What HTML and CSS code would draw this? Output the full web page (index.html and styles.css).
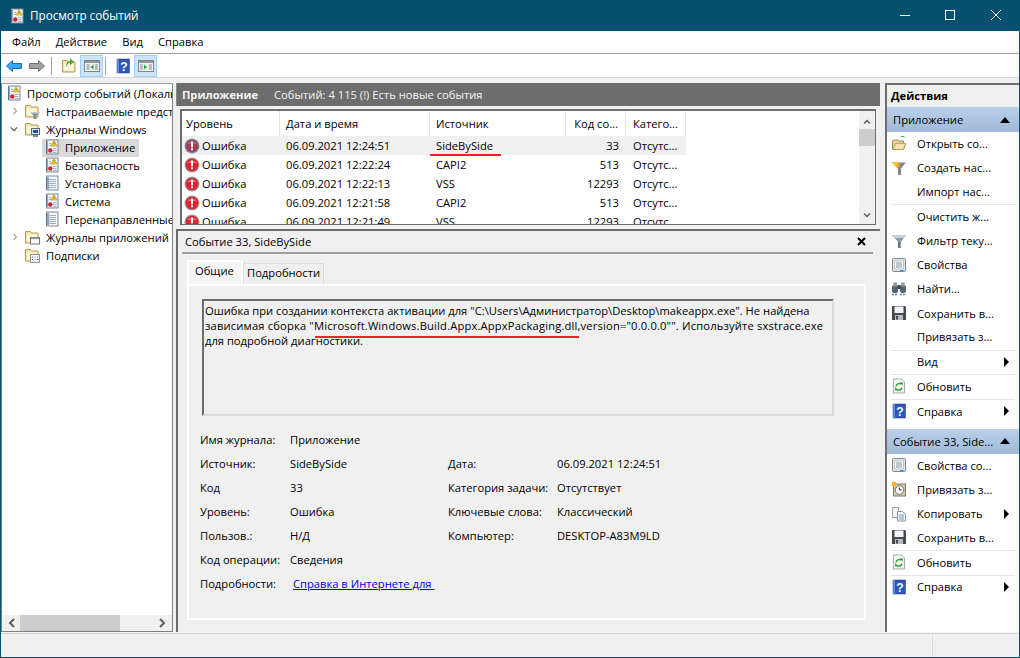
FILE: index.html
```html
<!DOCTYPE html>
<html lang="ru">

<head>
	<meta charset="utf-8" />
	<title>Просмотр событий</title>
	<link rel="stylesheet" href="styles.css">
</head>

<body>
	<svg class="defs" width="0" height="0">
		<symbol id="log" viewBox="0 0 16 16">
			<rect x="2.500" y="1" width="11.500" height="14" fill="#f2f5fa" stroke="#7a879a" />
			<path d="M2 3h3M2 5h3M2 7h3M2 9h3M2 11h3M2 13h3" stroke="#3f5a86" />
			<path d="M5 4.500h7M5 6.500h7M5 8.500h7M5 10.500h7M5 12.500h7" stroke="#9db0c8" />
		</symbol>
		<symbol id="logwarn" viewBox="0 0 16 16">
			<rect x="2.500" y="1" width="11.500" height="14" fill="#f2f5fa" stroke="#7a879a" />
			<path d="M2 3h2M2 5h2M2 7h2M2 9h2M2 11h2M2 13h2" stroke="#3f5a86" />
			<path d="M5 4.500h2M5 6.500h2M9 9.500h3.500M9 11.500h3.500M9 13.500h3.500" stroke="#9db0c8" />
			<path d="M10 1.500l3 5.500h-6z" fill="#f7d12e" stroke="#b58a10" stroke-width=".6" />
			<path d="M9.700 3.500h.7v2h-.7z" fill="#5a4a00" />
			<circle cx="6.300" cy="11.500" r="2.200" fill="#d5222c" />
		</symbol>
		<symbol id="folder" viewBox="0 0 16 16">
			<path d="M1.500 2.500h5l1 1.500h6.500v10h-12.500z" fill="#f8e6a8" stroke="#b59c5c" />
			<rect x="3" y="5.500" width="9.500" height="7" fill="#fdf7de" />
		</symbol>
		<symbol id="folderfilter" viewBox="0 0 16 16">
			<use href="#folder" width="16" height="16" />
			<path d="M6 9h10l-3.500 3.500v3.500h-3v-3.500z" fill="#7f8f9c" />
			<path d="M6 9h10l-1.500 1.500h-7z" fill="#c6d0d8" />
		</symbol>
		<symbol id="foldermon" viewBox="0 0 16 16">
			<use href="#folder" width="16" height="16" />
			<rect x="7.500" y="7.500" width="8" height="6" fill="#dfe6f0" stroke="#5a6878" />
			<rect x="9" y="9" width="5" height="3" fill="#1c4fae" />
			<path d="M9 15h5" stroke="#5a6878" stroke-width="1.500" />
		</symbol>
		<symbol id="folderwin" viewBox="0 0 16 16">
			<use href="#folder" width="16" height="16" />
			<rect x="6.500" y="8.500" width="9" height="6.500" fill="#fff" stroke="#6d7682" />
			<path d="M7 9.500h8" stroke="#9aa4b0" stroke-width="1.500" />
		</symbol>
		<symbol id="foldersub" viewBox="0 0 16 16">
			<use href="#folder" width="16" height="16" />
			<rect x="6.500" y="7.500" width="9" height="8" fill="#fff" stroke="#8a94a0" />
			<path d="M8 10h1M10.500 10h1M13 10h1M8 12.500h1M10.500 12.500h1" stroke="#3f6fb8" />
			<path d="M13 12.500h1.500" stroke="#d5222c" />
		</symbol>
		<symbol id="openfolder" viewBox="0 0 16 16">
			<path d="M1.500 6v8.500h11l2-6h-2v-2.500h-5l-1-1h-4z" fill="#e8d290" stroke="#a38c50" />
			<path d="M2 14.500l2.500-6h10l-2 6z" fill="#f5e3ad" stroke="#a38c50" stroke-width=".6" />
			<path d="M10 1.500h3.500" stroke="#3fc04a" />
		</symbol>
		<symbol id="filter" viewBox="0 0 16 16">
			<path d="M1 2.500h14l-5 6v6.500h-3v-6.500z" fill="#8a9aa8" />
			<path d="M1 2.500h14l-2 2.500h-10z" fill="#c8d2da" />
			<path d="M7 9h1.500v6h-1.500z" fill="#5f6d78" />
		</symbol>
		<symbol id="filteryellow" viewBox="0 0 16 16">
			<path d="M1 2.500h14l-5 6v6.500h-3v-6.500z" fill="#7f8a93" />
			<path d="M1 2.500h8l-1 5h-2.500z" fill="#f4a81c" />
			<circle cx="4.500" cy="3.500" r="2" fill="#ffc93a" />
		</symbol>
		<symbol id="props" viewBox="0 0 16 16">
			<rect x="1.500" y="1.500" width="13" height="13" rx="1" fill="#dfe4ea" stroke="#7c8794" />
			<rect x="3.500" y="4" width="9" height="8" fill="#fff" stroke="#9aa6b4" stroke-width=".6" />
			<path d="M5 6h6M5 8h6M5 10h6" stroke="#7d8fa6" />
			<rect x="9" y="13" width="3.500" height="1.200" fill="#3e9bd8" />
		</symbol>
		<symbol id="binoculars" viewBox="0 0 16 16">
			<rect x="1" y="4" width="6" height="8" rx="2" fill="#59636e" />
			<rect x="9" y="4" width="6" height="8" rx="2" fill="#59636e" />
			<rect x="2.500" y="1.500" width="3.500" height="4" fill="#8e98a3" />
			<rect x="10" y="1.500" width="3.500" height="4" fill="#8e98a3" />
			<rect x="6.500" y="4" width="3" height="4" fill="#3b434c" />
			<path d="M1 13.500h6M9 13.500h6" stroke="#3c86d6" stroke-width="1.500" stroke-dasharray="2 1" />
		</symbol>
		<symbol id="floppy" viewBox="0 0 16 16">
			<path d="M1 1h13l1 1v13h-14z" fill="#454b52" />
			<rect x="3.500" y="1.500" width="9" height="6.500" fill="#f4f5f6" />
			<rect x="4" y="10" width="8" height="5" fill="#b5bbc2" />
			<rect x="5" y="11" width="2" height="3.500" fill="#454b52" />
		</symbol>
		<symbol id="refresh" viewBox="0 0 16 16">
			<path d="M2.500 1h8l3 3v11h-11z" fill="#f4f6f4" stroke="#a4aeb0" />
			<path d="M11 9.500a3.200 3.200 0 0 1-5.600 1.500M5 8.500a3.200 3.200 0 0 1 5-2.300" fill="none" stroke="#34a63c" stroke-width="1.500" />
			<path d="M8.800 4.200l3.200.3-.4 3.200z" fill="#34a63c" />
			<path d="M4 9l3.200 3-3.200.5z" fill="#34a63c" />
		</symbol>
		<symbol id="help" viewBox="0 0 16 16">
			<rect x="2" y="1" width="12.500" height="14" fill="#2d58b8" stroke="#1d3a80" stroke-width=".5" />
			<rect x="2" y="1" width="2" height="14" fill="#5e86d8" />
			<text x="9" y="12.500" class="helpmark">?</text>
		</symbol>
		<symbol id="clock" viewBox="0 0 16 16">
			<rect x="2.500" y="3" width="12" height="12" fill="#d9cdb9" stroke="#7f7564" />
			<circle cx="8.500" cy="9" r="4.300" fill="#fff" stroke="#6e6e6e" />
			<path d="M8.500 6.500v2.500h2.200" fill="none" stroke="#333" />
			<circle cx="3" cy="3" r="2.500" fill="#f7b52a" />
		</symbol>
		<symbol id="copy" viewBox="0 0 16 16">
			<path d="M1.500 1.500h6v10h-6z" fill="#f5f7fa" stroke="#9aa6b4" />
			<path d="M6.500 5.500h5l3 3v6.500h-8z" fill="#fff" stroke="#7d8fa6" />
			<path d="M8 9h5M8 11h5M8 13h5" stroke="#5d93c8" />
		</symbol>
		<symbol id="error" viewBox="0 0 16 16">
			<circle cx="8" cy="8" r="7.500" fill="#9a9a9a" />
			<circle cx="8" cy="8" r="6.300" fill="#dd2230" />
			<path d="M3 6a5.500 4 0 0 1 10 0z" fill="#ef7078" />
			<rect x="7" y="3.500" width="2" height="5.800" fill="#fff" />
			<rect x="7" y="10.300" width="2" height="2" fill="#fff" />
		</symbol>
		<symbol id="errorsel" viewBox="0 0 16 16">
			<circle cx="8" cy="8" r="7.500" fill="#7d93b4" />
			<circle cx="8" cy="8" r="6.300" fill="#a33d54" />
			<path d="M3 6a5.500 4 0 0 1 10 0z" fill="#b86c7e" />
			<rect x="7" y="3.500" width="2" height="5.800" fill="#fff" />
			<rect x="7" y="10.300" width="2" height="2" fill="#fff" />
		</symbol>
		<symbol id="hidetree" viewBox="0 0 16 12">
			<rect x=".5" y=".5" width="15" height="11" fill="#eef0f2" stroke="#7f868e" />
			<rect x="1" y="1" width="14" height="2" fill="#8f979f" />
			<path d="M2.500 5h3M2.500 7h3M2.500 9h3M11 5h3M11 7h3M11 9h3" stroke="#7f868e" />
			<path d="M9.500 4.500v5l-3-2.500z" fill="#2fa83a" />
		</symbol>
		<symbol id="showtree" viewBox="0 0 16 12">
			<rect x=".5" y=".5" width="15" height="11" fill="#eef0f2" stroke="#7f868e" />
			<rect x="1" y="1" width="14" height="2" fill="#8f979f" />
			<path d="M2 5h2.500M2 7h2.500M2 9h2.500M11 5h3M11 7h3M11 9h3" stroke="#7f868e" />
			<path d="M6 4.500v5l3-2.500z" fill="#2fa83a" />
		</symbol>
	</svg>

	<div class="window">
		<div class="titlebar">
			<svg class="icon"><use href="#logwarn" /></svg>
			<span class="title">Просмотр событий</span>
			<div class="wincontrols">
				<svg width="46" height="31" class="winbtn"><path d="M19 15.500h10" stroke="#fff" /></svg>
				<svg width="46" height="31" class="winbtn"><rect x="18.500" y="10.500" width="9" height="9" fill="none" stroke="#fff" /></svg>
				<svg width="46" height="31" class="winbtn"><path d="M18 10l10 10M28 10l-10 10" stroke="#fff" /></svg>
			</div>
		</div>

		<div class="menubar">
			<span>Файл</span><span>Действие</span><span>Вид</span><span>Справка</span>
		</div>

		<div class="toolbar">
			<svg class="arrow" viewBox="0 0 16 12"><path d="M.500 6l6-5.500v3h9v5h-9v3z" fill="#3ba6f2" stroke="#1d6eb8" /></svg>
			<svg class="arrow" viewBox="0 0 16 12"><path d="M15.500 6l-6-5.500v3h-9v5h9v3z" fill="#a2a2a2" stroke="#707070" /></svg>
			<i class="toolsep"></i>
			<span class="toolbtn"><svg class="icon"><use href="#folder" /></svg><svg class="uparrow" width="10" height="11"><path d="M1 10q0-6 4-6v-3l4 4-4 3v-3q-2 1-4 5z" fill="#4aa83a" /></svg></span>
			<span class="toolbtn on"><svg class="paneicon"><use href="#hidetree" /></svg></span>
			<i class="toolsep second"></i>
			<span class="toolbtn"><svg class="icon"><use href="#help" /></svg></span>
			<span class="toolbtn on"><svg class="paneicon"><use href="#showtree" /></svg></span>
		</div>

		<div class="main">
			<div class="tree">
				<div class="treerows">
					<div class="node"><svg class="icon"><use href="#logwarn" /></svg><span>Просмотр событий (Локальный)</span></div>
					<div class="node lvl1"><svg class="chev" viewBox="0 0 8 10"><path d="M2 1l4 4-4 4" /></svg><svg class="icon"><use href="#folderfilter" /></svg><span>Настраиваемые представления</span></div>
					<div class="node lvl1"><svg class="chev open" viewBox="0 0 10 8"><path d="M1 2l4 4 4-4" /></svg><svg class="icon"><use href="#foldermon" /></svg><span>Журналы Windows</span></div>
					<div class="node lvl2 current"><svg class="icon"><use href="#logwarn" /></svg><span>Приложение</span></div>
					<div class="node lvl2"><svg class="icon"><use href="#logwarn" /></svg><span>Безопасность</span></div>
					<div class="node lvl2"><svg class="icon"><use href="#log" /></svg><span>Установка</span></div>
					<div class="node lvl2"><svg class="icon"><use href="#logwarn" /></svg><span>Система</span></div>
					<div class="node lvl2"><svg class="icon"><use href="#log" /></svg><span>Перенаправленные события</span></div>
					<div class="node lvl1"><svg class="chev" viewBox="0 0 8 10"><path d="M2 1l4 4-4 4" /></svg><svg class="icon"><use href="#folderwin" /></svg><span>Журналы приложений и служб</span></div>
					<div class="node lvl1 nochev"><svg class="icon"><use href="#foldersub" /></svg><span>Подписки</span></div>
				</div>
				<div class="hscroll">
					<svg class="hchev" viewBox="0 0 8 10"><path d="M6 1l-4 4 4 4" /></svg>
					<div class="hthumb"></div>
					<svg class="hchev" viewBox="0 0 8 10"><path d="M2 1l4 4-4 4" /></svg>
				</div>
			</div>

			<div class="center">
				<div class="banner"><b>Приложение</b><span>Событий: 4 115 (!) Есть новые события</span></div>

				<div class="events">
					<div class="grid">
						<div class="row head">
							<span>Уровень</span><span>Дата и время</span><span>Источник</span><span class="num">Код со...</span><span>Катего...</span>
						</div>
						<div class="row sel">
							<span><svg class="icon"><use href="#errorsel" /></svg>Ошибка</span><span>06.09.2021 12:24:51</span><span>SideBySide</span><span class="num">33</span><span>Отсутс...</span>
						</div>
						<div class="row">
							<span><svg class="icon"><use href="#error" /></svg>Ошибка</span><span>06.09.2021 12:22:24</span><span>CAPI2</span><span class="num">513</span><span>Отсутс...</span>
						</div>
						<div class="row">
							<span><svg class="icon"><use href="#error" /></svg>Ошибка</span><span>06.09.2021 12:22:13</span><span>VSS</span><span class="num">12293</span><span>Отсутс...</span>
						</div>
						<div class="row">
							<span><svg class="icon"><use href="#error" /></svg>Ошибка</span><span>06.09.2021 12:21:58</span><span>CAPI2</span><span class="num">513</span><span>Отсутс...</span>
						</div>
						<div class="row">
							<span><svg class="icon"><use href="#error" /></svg>Ошибка</span><span>06.09.2021 12:21:49</span><span>VSS</span><span class="num">12293</span><span>Отсутс...</span>
						</div>
						<i class="redline srcline"></i>
					</div>
					<div class="vscroll">
						<svg class="vchev" viewBox="0 0 10 8"><path d="M1 6l4-4 4 4" /></svg>
						<div class="vthumb"></div>
						<svg class="vchev" viewBox="0 0 10 8"><path d="M1 2l4 4 4-4" /></svg>
					</div>
				</div>

				<div class="detail">
					<div class="detailhead">
						<span>Событие 33, SideBySide</span>
						<svg width="9" height="9"><path d="M1 1l7 7M8 1l-7 7" stroke="#000" stroke-width="2" /></svg>
					</div>
					<div class="tabs">
						<span class="tab active">Общие</span><span class="tab">Подробности</span>
					</div>
					<div class="tabpanel">
						<div class="message">
							Ошибка при создании контекста активации для "C:\Users\Администратор\Desktop\makeappx.exe". Не найдена <span class="wideline">зависимая сборка "Microsoft.Windows.Build.Appx.AppxPackaging.dll,version="0.0.0.0"". Используйте sxstrace.exe</span><br>для подробной диагностики.
							<i class="redline msgline"></i>
						</div>
						<div class="fields">
							<span>Имя журнала:</span><span>Приложение</span><span></span><span></span>
							<span>Источник:</span><span>SideBySide</span><span>Дата:</span><span>06.09.2021 12:24:51</span>
							<span>Код</span><span>33</span><span>Категория задачи:</span><span>Отсутствует</span>
							<span>Уровень:</span><span>Ошибка</span><span>Ключевые слова:</span><span>Классический</span>
							<span>Пользов.:</span><span>Н/Д</span><span>Компьютер:</span><span>DESKTOP-A83M9LD</span>
							<span>Код операции:</span><span>Сведения</span><span></span><span></span>
							<span>Подробности:</span><a class="link" href="#">Справка в Интернете для&nbsp;</a>
						</div>
					</div>
				</div>
			</div>

			<div class="actions">
				<div class="actionstitle">Действия</div>
				<div class="section"><span>Приложение</span><i class="caret"></i></div>
				<div class="action"><svg class="icon"><use href="#openfolder" /></svg><span>Открыть со...</span></div>
				<div class="action"><svg class="icon"><use href="#filteryellow" /></svg><span>Создать нас...</span></div>
				<div class="action sep"><i class="noicon"></i><span>Импорт нас...</span></div>
				<div class="action"><i class="noicon"></i><span>Очистить ж...</span></div>
				<div class="action"><svg class="icon"><use href="#filter" /></svg><span>Фильтр теку...</span></div>
				<div class="action"><svg class="icon"><use href="#props" /></svg><span>Свойства</span></div>
				<div class="action"><svg class="icon"><use href="#binoculars" /></svg><span>Найти...</span></div>
				<div class="action"><svg class="icon"><use href="#floppy" /></svg><span>Сохранить в...</span></div>
				<div class="action sep"><i class="noicon"></i><span>Привязать з...</span></div>
				<div class="action sep"><i class="noicon"></i><span>Вид</span><i class="more"></i></div>
				<div class="action sep"><svg class="icon"><use href="#refresh" /></svg><span>Обновить</span></div>
				<div class="action"><svg class="icon"><use href="#help" /></svg><span>Справка</span><i class="more"></i></div>
				<div class="section second"><span>Событие 33, Side...</span><i class="caret"></i></div>
				<div class="action"><svg class="icon"><use href="#props" /></svg><span>Свойства со...</span></div>
				<div class="action"><svg class="icon"><use href="#clock" /></svg><span>Привязать з...</span></div>
				<div class="action"><svg class="icon"><use href="#copy" /></svg><span>Копировать</span><i class="more"></i></div>
				<div class="action sep"><svg class="icon"><use href="#floppy" /></svg><span>Сохранить в...</span></div>
				<div class="action sep"><svg class="icon"><use href="#refresh" /></svg><span>Обновить</span></div>
				<div class="action"><svg class="icon"><use href="#help" /></svg><span>Справка</span><i class="more"></i></div>
			</div>
		</div>

		<div class="statusbar"><i></i></div>
	</div>
</body>

</html>
```

FILE: styles.css
```css
* {
	box-sizing: border-box;
}

body {
	margin: 0;
	font-family: "Open Sans", "Noto Sans", sans-serif;
	font-size: 11.2px;
	color: #000;
	overflow: hidden;
}

.defs {
	position: absolute;
}

.helpmark {
	font: bold 12px "Liberation Sans", sans-serif;
	fill: #fff;
	text-anchor: middle;
}

.icon {
	width: 16px;
	height: 16px;
	flex: none;
}

.window {
	width: 1020px;
	height: 658px;
	display: flex;
	flex-direction: column;
	background: #f0f0f0;
	border: 1px solid #05506f;
	border-top: 0;
}

.titlebar {
	height: 31px;
	flex: none;
	margin: 0 -1px;
	padding-left: 9px;
	display: flex;
	align-items: center;
	background: #05506f;
	color: #fff;
}

.title {
	margin: 0 0 2px 5px;
	font-size: 11.7px;
}

.wincontrols {
	margin-left: auto;
	margin-right: 1px;
	display: flex;
}

.winbtn {
	display: block;
}

.menubar {
	height: 23px;
	flex: none;
	padding: 0 0 2px 3.5px;
	display: flex;
	align-items: center;
	background: #fff;
	border-bottom: 1px solid #a0a0a0;
}

.menubar span {
	padding: 0 7.5px;
}

.toolbar {
	height: 24px;
	flex: none;
	padding-left: 5px;
	display: flex;
	align-items: center;
	background: #fff;
	border-bottom: 1px solid #d8d8d8;
}

.arrow {
	width: 16px;
	height: 12px;
	margin-right: 7px;
}

.toolsep {
	width: 1px;
	height: 18px;
	margin: 0 5px 0 -1px;
	background: #a0a0a0;
}

.toolsep.second {
	margin: 0 5px 0 2px;
}

.toolbtn {
	width: 23px;
	height: 22px;
	display: flex;
	align-items: center;
	justify-content: center;
	position: relative;
}

.toolbtn.on {
	background: #cce4f7;
	border: 1px solid #99d1ff;
}

.paneicon {
	width: 16px;
	height: 12px;
}

.uparrow {
	position: absolute;
	left: 8px;
	top: 2px;
}

.main {
	flex: 1;
	min-height: 0;
	margin-top: 5px;
	display: flex;
}

.tree {
	width: 172px;
	flex: none;
	display: flex;
	flex-direction: column;
	background: #fff;
	border: 1px solid #808080;
	border-top-color: #a0a0a0;
	margin-bottom: 1px;
}

.treerows {
	flex: 1;
	overflow: hidden;
	padding: 1px 0 0 4px;
}

.node {
	height: 18px;
	padding-bottom: 2px;
	display: flex;
	align-items: center;
	gap: 3px;
	white-space: nowrap;
}

.node span {
	padding: 0 2px;
}

.lvl1 {
	padding-left: 6px;
}

.lvl1 .icon {
	margin: 0 1px 0 3px;
}

.nochev {
	padding-left: 15px;
}

.lvl2 {
	width: fit-content;
	margin-left: 36px;
	padding-left: 2px;
	padding-right: 2px;
}

.current {
	background: #d9d9d9;
}

.chev {
	width: 6px;
	height: 10px;
	flex: none;
	fill: none;
	stroke: #a6a6a6;
	stroke-width: 1.6;
}

.chev.open {
	width: 8px;
	margin-left: -2px;
	stroke: #555;
}

.hscroll {
	height: 16px;
	flex: none;
	padding: 0 6px;
	display: flex;
	align-items: center;
	background: #f0f0f0;
}

.hchev {
	width: 8px;
	height: 10px;
	flex: none;
	fill: none;
	stroke: #606060;
	stroke-width: 2;
}

.hthumb {
	width: 100px;
	height: 16px;
	margin: 0 auto 0 4px;
	background: #cdcdcd;
}

.center {
	width: 704px;
	flex: none;
	margin-left: 3px;
	display: flex;
	flex-direction: column;
}

.banner {
	height: 23px;
	flex: none;
	padding-left: 5px;
	display: flex;
	align-items: center;
	gap: 16px;
	background: #6d6d6d;
	color: #f4f4f4;
	border-left: 1px solid #8a8a8a;
}

.events {
	height: 116px;
	flex: none;
	margin: 3px 4px 0;
	display: flex;
	background: #fff;
	border: solid #6d6d6d;
	border-width: 2px 1px 1px 2px;
}

.grid {
	flex: 1;
	overflow: hidden;
	position: relative;
}

.row {
	height: 19px;
	display: grid;
	grid-template-columns: 98px 150px 136px 60px 60px;
	align-items: center;
	white-space: nowrap;
}

.row span {
	padding-left: 6px;
	display: flex;
	align-items: center;
}

.row span:first-child {
	padding-left: 2px;
	gap: 2px;
}

.row span:last-child {
	padding-left: 7px;
}

.row .num {
	padding: 0 7px 0 0;
	justify-content: flex-end;
}

.head {
	height: 25px;
}

.head span {
	height: 25px;
	border-right: 1px solid #e5e5e5;
}

.head span:first-child {
	padding-left: 4px;
}

.sel span {
	height: 19px;
	background: #f0f0f0;
}

.redline {
	position: absolute;
	height: 2px;
	background: #f0202c;
}

.srcline {
	left: 248px;
	top: 43px;
	width: 71px;
}

.vscroll {
	width: 16px;
	flex: none;
	background: #f0f0f0;
	display: flex;
	flex-direction: column;
	align-items: center;
	padding: 8px 0 6px;
}

.vchev {
	width: 8px;
	height: 6px;
	flex: none;
	fill: none;
	stroke: #606060;
	stroke-width: 2;
}

.vthumb {
	width: 16px;
	height: 17px;
	margin: 4px 0 auto;
	background: #cdcdcd;
}

.detail {
	flex: 1;
	margin: 4px 0 1px;
	padding: 0 14px 12px 9px;
	display: flex;
	flex-direction: column;
	border: solid #6d6d6d;
	border-width: 2px 0 0 2px;
}

.detailhead {
	height: 23px;
	flex: none;
	margin: 0 -7px 0 -5px;
	padding: 0 3px;
	display: flex;
	align-items: center;
	justify-content: space-between;
	border-bottom: 2px solid #a0a0a0;
}

.detailhead svg {
	margin-right: 4px;
}

.tabs {
	height: 24px;
	flex: none;
	margin-top: 6px;
	display: flex;
	align-items: flex-end;
}

.tab {
	height: 21px;
	padding: 0 3px;
	line-height: 18px;
	border: 1px solid #dcdcdc;
	border-bottom: 0;
}

.tab.active {
	height: 24px;
	width: 56px;
	padding: 0 6px;
	background: #f5f5f5;
	border-color: #fff;
	border-width: 2px 2px 0;
}

.tabpanel {
	flex: 1;
	padding: 13px 30px 0 13px;
	border: 2px solid #fff;
}

.message {
	height: 117px;
	padding: 2px 1px;
	line-height: 15px;
	position: relative;
	border: 2px solid;
	border-color: #6d6d6d #dcdcdc #dcdcdc #6d6d6d;
}

.wideline {
	letter-spacing: 0.16px;
}

.msgline {
	left: 111px;
	top: 35px;
	width: 264px;
}

.fields {
	margin: 11px -30px 0 -2px;
	display: grid;
	grid-template-columns: 90px 158px 109px 1fr;
	grid-auto-rows: 24px;
	align-items: center;
}

.link {
	grid-column: 2 / 5;
	margin-left: 3px;
	color: #0000ee;
	text-decoration: underline;
}

.actions {
	width: 134px;
	flex: none;
	margin: 0 0 1px 5px;
	display: flex;
	flex-direction: column;
	background: #fff;
	border: solid #6d6d6d;
	border-width: 2px 0 0 2px;
}

.actionstitle {
	height: 22px;
	padding-left: 4px;
	line-height: 22px;
	flex: none;
	font-weight: 700;
	background: #f0f0f0;
}

.section {
	height: 25px;
	flex: none;
	padding: 0 9px 0 6px;
	display: flex;
	align-items: center;
	justify-content: space-between;
	background: linear-gradient(#b9d1ea, #a0b9d8);
}

.section.second {
	margin-top: 5px;
}

.caret {
	width: 0;
	height: 0;
	border: solid transparent;
	border-width: 0 5px 6px;
	border-bottom-color: #000;
}

.action {
	height: 24.2px;
	flex: none;
	margin: 0 4px;
	padding-bottom: 1.5px;
	display: flex;
	align-items: center;
	white-space: nowrap;
}

.action .icon,
.noicon {
	width: 16px;
	margin-right: 10px;
	flex: none;
}

.sep {
	height: 24.6px;
	border-bottom: 1px solid #e6e6e6;
}

.more {
	width: 0;
	height: 0;
	margin-left: auto;
	margin-right: 6px;
	border: solid transparent;
	border-width: 5px 0 5px 5px;
	border-left-color: #000;
}

.statusbar {
	height: 24px;
	flex: none;
	border-top: 1px solid #d4d4d4;
}

.statusbar i {
	display: block;
	height: 100%;
	margin-left: 931px;
	border-left: 1px solid #dcdcdc;
}
```
